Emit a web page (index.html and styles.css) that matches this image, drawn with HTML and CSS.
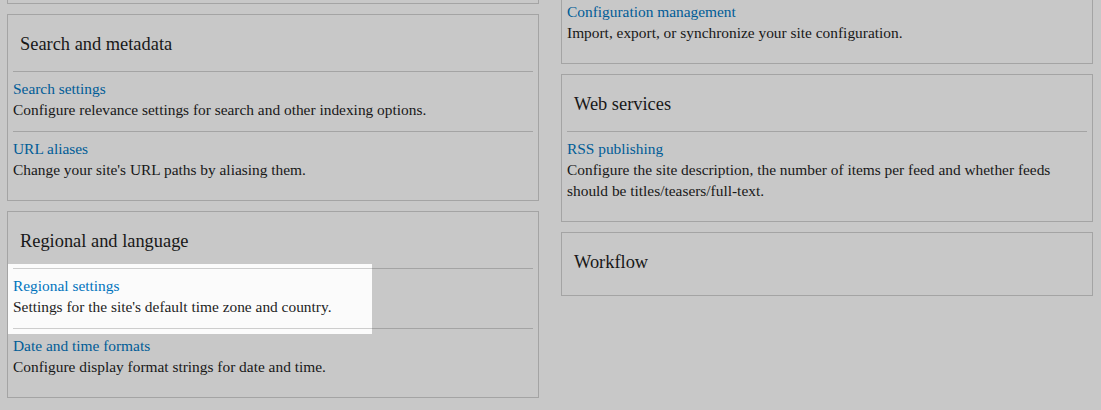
FILE: index.html
```html
<!DOCTYPE html>
<html lang="en">
<head>
<meta charset="utf-8">
<title>Configuration</title>
<link rel="stylesheet" href="styles.css">
</head>
<body>
<div class="page">
  <div class="col">
    <div class="panel">
      <h3 class="panel-title">Media</h3>
      <ul class="admin-list">
        <li class="admin-item"><a href="#">File system</a><div class="desc">Tell Drupal where to store uploaded files.</div></li>
        <li class="admin-item"><a href="#">Image styles</a><div class="desc">Configure styles that can be used for resizing images.</div></li>
        <li class="admin-item"><a href="#">Image toolkit</a><div class="desc">Choose which image toolkit to use.</div></li>
      </ul>
    </div>
    <div class="panel">
      <h3 class="panel-title">Search and metadata</h3>
      <ul class="admin-list">
        <li class="admin-item"><a href="#">Search settings</a><div class="desc">Configure relevance settings for search and other indexing options.</div></li>
        <li class="admin-item"><a href="#">URL aliases</a><div class="desc">Change your site's URL paths by aliasing them.</div></li>
      </ul>
    </div>
    <div class="panel">
      <h3 class="panel-title">Regional and language</h3>
      <ul class="admin-list">
        <li class="admin-item"><span class="tour-hole"></span><a href="#">Regional settings</a><div class="desc">Settings for the site's default time zone and country.</div></li>
        <li class="admin-item"><a href="#">Date and time formats</a><div class="desc">Configure display format strings for date and time.</div></li>
      </ul>
    </div>
  </div>
  <div class="col">
    <div class="panel">
      <h3 class="panel-title">Development</h3>
      <ul class="admin-list">
        <li class="admin-item"><a href="#">Maintenance mode</a><div class="desc">Take the site offline for maintenance.</div></li>
        <li class="admin-item"><a href="#">Performance</a><div class="desc">Configure caching and bandwidth optimizations.</div></li>
        <li class="admin-item"><a href="#">Logging and errors</a><div class="desc">Settings for logging and alerts modules.</div></li>
        <li class="admin-item"><a href="#">Configuration management</a><div class="desc">Import, export, or synchronize your site configuration.</div></li>
      </ul>
    </div>
    <div class="panel">
      <h3 class="panel-title">Web services</h3>
      <ul class="admin-list">
        <li class="admin-item"><a href="#">RSS publishing</a><div class="desc">Configure the site description, the number of items per feed and whether feeds should be titles/teasers/full-text.</div></li>
      </ul>
    </div>
    <div class="panel panel--empty">
      <h3 class="panel-title">Workflow</h3>
    </div>
  </div>
</div>
</body>
</html>
```
FILE: styles.css
```css
html, body {
  margin: 0;
  background: #fbfbfb;
}
body {
  font-family: "Liberation Serif", "Times New Roman", serif;
  color: #1e1e1e;
  height: 410px;
  overflow: hidden;
}
/* the page is shown scrolled: its upper part lies above the window */
.page {
  display: grid;
  grid-template-columns: 1fr 1fr;
  column-gap: 22px;
  padding: 0 8px 0 7px;
  margin-top: -243px;
  align-items: start;
}
.col {
  display: flex;
  flex-direction: column;
  gap: 10px;
}
.panel {
  border: 1px solid #cdcdcd;
  padding: 0 5px 9px;
}
.panel-title {
  margin: 0;
  padding: 18px 7px 16px;
  font-size: 18.4px;
  font-weight: normal;
  line-height: 22px;
}
.panel--empty .panel-title {
  padding-bottom: 13px;
}
.admin-list {
  list-style: none;
  margin: 0;
  padding: 0;
}
.admin-item {
  position: relative;
  border-top: 1px solid #cdcdcd;
  padding: 6px 0 11px;
  font-size: 15.4px;
  line-height: 21px;
}
.admin-item a {
  display: block;
  color: #0074bd;
  text-decoration: none;
}
.tour-hole {
  position: absolute;
  left: -5px;
  top: -5px;
  width: 364px;
  height: 70px;
  box-shadow: 0 0 0 3000px rgba(0, 0, 0, 0.2);
  pointer-events: none;
  z-index: 10;
}
```
